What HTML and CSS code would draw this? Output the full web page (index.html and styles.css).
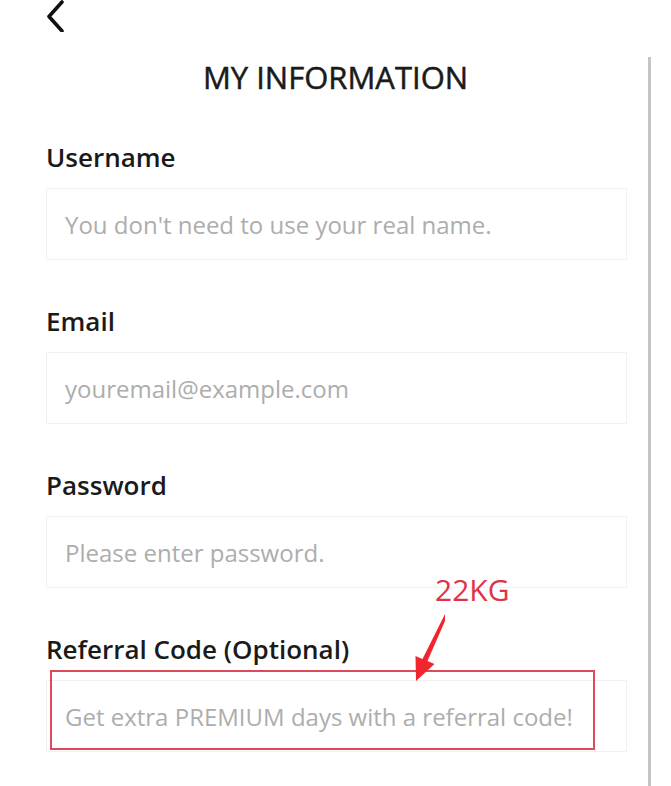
FILE: index.html
```html
<!DOCTYPE html>
<html lang="en">
<head>
<meta charset="utf-8">
<title>My Information</title>
<link rel="stylesheet" href="styles.css">
</head>
<body>
<header class="topbar">
  <button class="back" aria-label="Back">
    <svg width="20" height="32" viewBox="0 0 20 32"><polyline points="16,2 3,16.5 16,31" fill="none" stroke="#111" stroke-width="3.6" stroke-linecap="round" stroke-linejoin="round"/></svg>
  </button>
</header>
<main class="panel">
  <h1 class="title">MY INFORMATION</h1>
  <form class="form">
    <div class="field">
      <label class="label">Username</label>
      <div class="input"><span class="ph">You don't need to use your real name.</span></div>
    </div>
    <div class="field">
      <label class="label">Email</label>
      <div class="input"><span class="ph">youremail@example.com</span></div>
    </div>
    <div class="field">
      <label class="label">Password</label>
      <div class="input"><span class="ph">Please enter password.</span></div>
    </div>
    <div class="field">
      <label class="label">Referral Code (Optional)</label>
      <div class="input"><span class="ph">Get extra PREMIUM days with a referral code!</span></div>
    </div>
  </form>
</main>
<div class="annot-box"></div>
<div class="annot-text">22KG</div>
<svg class="annot-arrow" width="40" height="75" viewBox="405 608 40 75">
  <polygon points="446,612 448,614 427.5,661 434.5,664 416,681 415.5,656 422.5,659" fill="#f0252f"/>
</svg>
</body>
</html>
```

FILE: styles.css
```css
html, body {
  margin: 0;
  padding: 0;
  background: #fff;
}
body {
  font-family: "Open Sans", "Noto Sans", sans-serif;
  color: #1c1c1c;
  width: 671px;
  height: 786px;
  overflow: hidden;
  position: relative;
}
.topbar {
  height: 57px;
  display: flex;
  align-items: flex-start;
  padding-left: 46px;
}
.back {
  border: 0;
  background: none;
  padding: 0;
  margin-top: 0;
  display: block;
}
.back svg { display: block; }
.panel {
  width: 648px;
  border-right: 3px solid #c5c5c5;
  box-sizing: content-box;
  min-height: 729px;
}
.title {
  margin: 0;
  padding-left: 23px;
  font-size: 31px;
  line-height: 40px;
  font-weight: 500;
  -webkit-text-stroke: 0.5px #1a1a1a;
  text-align: center;
  color: #1a1a1a;
}
.form {
  display: flex;
  flex-direction: column;
  gap: 45px;
  padding: 44px 21px 0 46px;
}
.field {
  display: flex;
  flex-direction: column;
  gap: 15px;
}
.label {
  font-size: 26px;
  line-height: 32px;
  font-weight: 600;
  color: #1a1a1a;
}
.input {
  height: 72px;
  box-sizing: border-box;
  border: 1px solid #f1f1f1;
  display: flex;
  align-items: center;
  padding-left: 18px;
}
.ph {
  font-size: 24px;
  color: #adadad;
}
.annot-box {
  position: absolute;
  left: 50px;
  top: 670px;
  width: 545px;
  height: 80px;
  box-sizing: border-box;
  border: 2px solid #dc4a5c;
}
.annot-text {
  position: absolute;
  left: 435px;
  top: 570px;
  font-family: "Open Sans", sans-serif;
  font-size: 30px;
  line-height: 40px;
  color: #e0334a;
}
.annot-arrow {
  position: absolute;
  left: 405px;
  top: 608px;
}
```
